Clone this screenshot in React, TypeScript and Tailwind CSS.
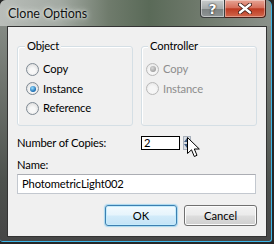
import React from 'react';

const font = { fontFamily: 'Lato, "Noto Sans", sans-serif' };

function Radio({ label, checked, disabled }: { label: string; checked?: boolean; disabled?: boolean }) {
  return (
    <div className="flex items-center gap-[4px]">
      <div
        className={`w-[13px] h-[13px] rounded-full border flex items-center justify-center ${
          disabled
            ? 'border-[#b8b8b8] bg-[radial-gradient(circle_at_50%_60%,#f6f6f6_40%,#e0e0e0_100%)]'
            : 'border-[#7f8a94] bg-[radial-gradient(circle_at_50%_60%,#f8f8f8_30%,#d4d4d4_100%)]'
        }`}
      >
        {checked && (
          <div
            className={`w-[6px] h-[6px] rounded-full ${
              disabled
                ? 'bg-[radial-gradient(circle_at_40%_35%,#d8d8d8,#8c8c8c)]'
                : 'bg-[radial-gradient(circle_at_40%_35%,#9be0ff,#1568b0_70%,#0b4a86)]'
            }`}
          />
        )}
      </div>
      <span className={`text-[11.2px] tracking-[-0.15px] leading-none ${disabled ? 'text-[#8d8d8d]' : 'text-black'}`}>{label}</span>
    </div>
  );
}

function GroupBox({ title, padLeft, children }: { title: string; padLeft: string; children: React.ReactNode }) {
  return (
    <div className="relative w-[116px] h-[80px] border border-[#d5dfe5] rounded-[3px] shadow-[inset_1px_1px_0_#ffffff]">
      <span className={`absolute -top-[9px] ${padLeft === 'pl-[8px]' ? 'left-[7px]' : 'left-[6px]'} px-[2px] bg-[#f0f0f0] text-[11.2px] tracking-[-0.15px] leading-[16px] text-black`}>
        {title}
      </span>
      <div className={`flex flex-col pt-[12px] ${padLeft}`}>{children}</div>
    </div>
  );
}

export default function App() {
  return (
    <div className="w-[274px] h-[244px] bg-[#262626]" style={font}>
      <div className="relative w-[272px] h-[242px] flex flex-col rounded-t-[6px] rounded-b-[3px] border-r border-b border-[#3db7ea] overflow-hidden bg-[linear-gradient(180deg,#8e948e_0%,#6f746e_35%,#4d514d_75%,#464646_100%)]">
        {/* title bar */}
        <div className="h-[26px] flex items-start bg-[linear-gradient(90deg,#b9bdb9_0%,#a3aaa3_22%,#6f7b6c_40%,#5a6a58_55%,#6d786a_72%,#8b918a_100%)]">
          <span className="pl-[8px] pt-[6px] text-[12.5px] leading-[16px] text-[#111] [text-shadow:0_0_6px_#e8ece8,0_0_3px_#e8ece8]">
            Clone Options
          </span>
          <div className="ml-auto mr-[5px] flex h-[18px]">
            <div className="w-[25px] h-[18px] rounded-bl-[4px] border border-t-0 border-[#3a3d3d] bg-[linear-gradient(180deg,#c9cccc_0%,#a6abab_50%,#7c8282_51%,#8f9595_100%)] shadow-[inset_0_0_0_1px_rgba(255,255,255,0.45)] flex items-center justify-center">
              <span className="text-[14px] font-bold leading-none text-white [text-shadow:0_0_1px_#222,0_0_2px_#222]" style={{ fontFamily: '"DejaVu Sans", sans-serif' }}>?</span>
            </div>
            <div className="w-[41px] h-[18px] rounded-br-[4px] border border-l-0 border-t-0 border-[#4a1f18] bg-[linear-gradient(180deg,#e7a595_0%,#d6705c_45%,#bd3a22_52%,#d2674c_100%)] shadow-[inset_0_0_0_1px_rgba(255,255,255,0.35)] flex items-center justify-center">
              <svg width="14" height="11" viewBox="0 0 14 11">
                <path d="M2 1.5 L12 9.5 M12 1.5 L2 9.5" stroke="#3a1a14" strokeWidth="4" strokeLinecap="round" />
                <path d="M2 1.5 L12 9.5 M12 1.5 L2 9.5" stroke="#ffffff" strokeWidth="2.4" strokeLinecap="round" />
              </svg>
            </div>
          </div>
        </div>

        {/* client area */}
        <div className="ml-[7px] w-[260px] h-[211px] border border-[#333] bg-[#f0f0f0] flex flex-col">
          <div className="flex gap-[8px] ml-[9px] mt-[19px]">
            <GroupBox title="Object" padLeft="pl-[8px]">
              <div className="h-[20px] flex items-center"><Radio label="Copy" /></div>
              <div className="h-[19px] flex items-center"><Radio label="Instance" checked /></div>
              <div className="h-[20px] flex items-center"><Radio label="Reference" /></div>
            </GroupBox>
            <GroupBox title="Controller" padLeft="pl-[4px]">
              <div className="h-[20px] flex items-center"><Radio label="Copy" checked disabled /></div>
              <div className="h-[19px] flex items-center"><Radio label="Instance" disabled /></div>
            </GroupBox>
          </div>

          <div className="relative flex items-center ml-[9px] mt-[10px] h-[14px]">
            <span className="w-[124px] text-[11.2px] tracking-[-0.15px] leading-none">Number of Copies:</span>
            <div className="w-[39px] h-[14px] border border-black bg-white flex items-center pl-[2px] text-[11.2px] leading-none">2</div>
            <div className="ml-[3px] w-[8px] h-[14px] bg-[#d9dde3] border border-[#a8b0bb] flex flex-col items-center justify-around">
              <svg width="6" height="4" viewBox="0 0 6 4"><path d="M0 4 L3 0 L6 4 Z" fill="#3d5a80" /></svg>
              <svg width="6" height="4" viewBox="0 0 6 4"><path d="M0 0 L3 4 L6 0 Z" fill="#3d5a80" /></svg>
            </div>
            {/* mouse pointer */}
            <svg className="absolute left-[170px] top-[1px]" width="13" height="21" viewBox="0 0 13 21">
              <path d="M0.5 0.5 L0.5 16.5 L4.5 12.8 L7.3 19.5 L10 18.3 L7.3 12 L12.3 12 Z" fill="#ffffff" stroke="#000000" strokeWidth="1" strokeLinejoin="miter" />
            </svg>
          </div>

          <span className="ml-[9px] mt-[9px] text-[11.2px] tracking-[-0.15px] leading-[12px]">Name:</span>
          <div className="ml-[9px] mt-[3px] w-[239px] h-[20px] bg-white border border-[#c3c8cf] border-t-[#abadb3] flex items-center pl-[4px] text-[11.2px] tracking-[-0.15px] leading-none">
            PhotometricLight002
          </div>

          <div className="flex justify-end gap-[7px] mr-[9px] mt-[11px]">
            <button className="w-[72px] h-[21px] rounded-[3px] border border-[#3c7fb1] shadow-[0_0_1px_1px_rgba(120,200,240,0.6),inset_0_0_0_1px_#c5ecfc] bg-[linear-gradient(180deg,#f3fafe_0%,#e6f4fc_48%,#d2ebfa_52%,#c4e3f6_100%)] text-[11.2px] leading-none">
              OK
            </button>
            <button className="w-[73px] h-[21px] rounded-[3px] border border-[#707070] shadow-[inset_0_0_0_1px_#fcfcfc] bg-[linear-gradient(180deg,#f2f2f2_0%,#ebebeb_48%,#dddddd_52%,#cfcfcf_100%)] text-[11.2px] leading-none">
              Cancel
            </button>
          </div>
        </div>
      </div>
    </div>
  );
}
